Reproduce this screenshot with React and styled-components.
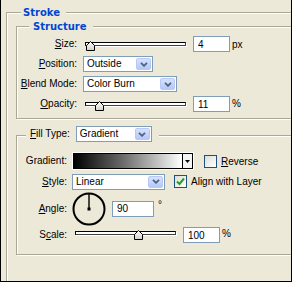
import React from "react";
import styled, { createGlobalStyle } from "styled-components";

const GlobalStyle = createGlobalStyle`
  html, body {
    margin: 0;
    padding: 0;
    background: #ece9d8;
  }
  body {
    font-family: "Liberation Sans", Arial, sans-serif;
    font-size: 10px;
    color: #000;
  }
`;

const Window = styled.div`
  width: 292px;
  height: 282px;
  box-sizing: border-box;
  border: 1px solid #000;
  border-top: none;
  background: #ece9d8;
  overflow: hidden;
  padding-left: 5px;
`;

const GroupBox = styled.fieldset`
  width: ${(p) => p.$w}px;
  min-width: 0;
  box-sizing: border-box;
  margin: ${(p) => p.$mt || 0}px 0 0 0;
  padding: ${(p) => p.$pt}px 0 ${(p) => p.$pb}px ${(p) => p.$pl}px;
  border: 1px solid #aca899;
  box-shadow: inset 1px 1px 0 #fff, 1px 1px 0 #fff;
`;

const Legend = styled.legend`
  margin-left: ${(p) => p.$ml}px;
  padding: 0 ${(p) => p.$pr}px 0 ${(p) => p.$pl}px;
  background: #ece9d8;
  font-family: "DejaVu Sans", Verdana, sans-serif;
  font-weight: bold;
  font-size: 10px;
  line-height: 13px;
  color: #0046d5;
`;

const ControlLegend = styled.legend`
  margin-left: 9px;
  padding: 0 7px 2px 4px;
  background: #ece9d8;
`;

const LegendInner = styled.div`
  display: flex;
  align-items: center;
`;

const Row = styled.div`
  display: flex;
  align-items: center;
  height: ${(p) => p.$h}px;
`;

const Label = styled.label`
  flex: none;
  width: ${(p) => p.$w}px;
  margin-right: 6px;
  text-align: right;
  white-space: nowrap;
  line-height: 12px;
`;

const InlineLabel = styled.label`
  flex: none;
  margin-right: 6px;
  white-space: nowrap;
  line-height: 12px;
`;

const Combo = styled.div`
  flex: none;
  display: flex;
  align-items: center;
  box-sizing: border-box;
  width: ${(p) => p.$w}px;
  height: 16px;
  margin-left: ${(p) => p.$ml || 0}px;
  padding: 1px;
  border: 1px solid #7f9db9;
  background: #fff;
`;

const ComboText = styled.span`
  flex: 1;
  padding-left: 2px;
  line-height: 12px;
  white-space: nowrap;
  overflow: hidden;
`;

const ComboButton = styled.span`
  flex: none;
  display: flex;
  align-items: center;
  justify-content: center;
  box-sizing: border-box;
  width: 15px;
  height: 12px;
  border: 1px solid #b7caf5;
  border-radius: 2px;
  background: linear-gradient(#d6e1fd, #b4c8f7);
`;

const NumberInput = styled.input`
  flex: none;
  box-sizing: border-box;
  width: ${(p) => p.$w}px;
  height: 16px;
  margin: 0 0 0 ${(p) => p.$ml}px;
  padding: 0 0 0 4px;
  border: 1px solid #7f9db9;
  background: #fff;
  font: 10px "Liberation Sans", Arial, sans-serif;
  color: #000;
  outline: none;
`;

const Unit = styled.span`
  align-self: flex-start;
  margin-top: ${(p) => p.$mt}px;
  margin-left: ${(p) => p.$ml}px;
  font-size: ${(p) => p.$size || 10}px;
  line-height: 10px;
`;

const SliderBox = styled.div`
  position: relative;
  flex: none;
  align-self: flex-start;
  width: ${(p) => p.$w}px;
  height: 10px;
  margin: ${(p) => p.$mt}px 0 0 ${(p) => p.$ml}px;
`;

const Track = styled.div`
  box-sizing: border-box;
  height: 4px;
  margin-top: 1px;
  border: 1px solid #000;
  border-right-color: #404040;
  border-bottom-color: #404040;
  background: #fff;
  box-shadow: 1px 1px 0 #fff;
`;

const Thumb = styled.svg`
  position: absolute;
  top: 0;
  display: block;
`;

const GradientPicker = styled.div`
  flex: none;
  display: flex;
  box-sizing: border-box;
  width: 120px;
  height: 16px;
  border: 1px solid #000;
  box-shadow: 0 0 0 1px #fff;
`;

const GradientSwatch = styled.div`
  flex: 1;
  background: linear-gradient(to right, #000 0%, #6a6a6a 45%, #ffffff 100%);
`;

const GradientArrow = styled.div`
  flex: none;
  display: flex;
  align-items: center;
  justify-content: center;
  width: 9px;
  border-left: 1px solid #000;
  background: #f4f4f4;
`;

const CheckField = styled.label`
  flex: none;
  display: flex;
  align-items: center;
  margin-left: ${(p) => p.$ml}px;
  white-space: nowrap;
`;

const CheckBox = styled.span`
  flex: none;
  display: flex;
  align-items: center;
  justify-content: center;
  box-sizing: border-box;
  width: 13px;
  height: 13px;
  margin-right: 4px;
  border: 1px solid #1c5180;
  background: linear-gradient(135deg, #dcdcd7, #ffffff);
`;

const Dial = styled.svg`
  flex: none;
  display: block;
  margin-left: -1px;
`;

const Chevron = () => (
  <svg width="8" height="5" viewBox="0 0 8 5">
    <polyline points="1,0.8 4,3.8 7,0.8" fill="none" stroke="#4d6185" strokeWidth="1.8" />
  </svg>
);

const Select = ({ width, value, ml }) => (
  <Combo $w={width} $ml={ml}>
    <ComboText>{value}</ComboText>
    <ComboButton>
      <Chevron />
    </ComboButton>
  </Combo>
);

const Slider = ({ width, value, min, max, ml, mt }) => {
  const left = Math.round(((value - min) / (max - min)) * (width - 9));
  return (
    <SliderBox $w={width} $ml={ml} $mt={mt}>
      <Track />
      <Thumb width="9" height="10" viewBox="0 0 9 10" style={{ left }}>
        <defs>
          <linearGradient id="thumbFill" x1="0" y1="0" x2="0" y2="1">
            <stop offset="0" stopColor="#ffffff" />
            <stop offset="1" stopColor="#d4d0c8" />
          </linearGradient>
        </defs>
        <polygon
          points="0.5,9.5 0.5,4.5 4.5,0.5 8.5,4.5 8.5,9.5"
          fill="url(#thumbFill)"
          stroke="#000"
          strokeWidth="1"
        />
      </Thumb>
    </SliderBox>
  );
};

const Check = ({ checked }) => (
  <CheckBox>
    {checked && (
      <svg width="9" height="9" viewBox="0 0 9 9">
        <polyline points="1,4.5 3.5,7 8,1.5" fill="none" stroke="#21a121" strokeWidth="2" />
      </svg>
    )}
  </CheckBox>
);

export default function App() {
  return (
    <>
      <GlobalStyle />
      <Window>
        <GroupBox $w={340} $mt={6} $pt={1} $pl={9} $pb={40}>
          <Legend $ml={5} $pl={2} $pr={6}>Stroke</Legend>

          <GroupBox $w={330} $pt={1} $pl={0} $pb={4}>
            <Legend $ml={12} $pl={4} $pr={6}>Structure</Legend>
            <Row $h={20}>
              <Label $w={60}>
                <u>S</u>ize:
              </Label>
              <Slider width={101} value={4} min={1} max={250} ml={2} mt={7} />
              <NumberInput $w={37} $ml={7} defaultValue="4" readOnly />
              <Unit $ml={2} $mt={6}>px</Unit>
            </Row>
            <Row $h={20}>
              <Label $w={60}>
                <u>P</u>osition:
              </Label>
              <Select width={70} value="Outside" />
            </Row>
            <Row $h={20}>
              <Label $w={60}>
                <u>B</u>lend Mode:
              </Label>
              <Select width={94} value="Color Burn" />
            </Row>
            <Row $h={20}>
              <Label $w={60}>
                <u>O</u>pacity:
              </Label>
              <Slider width={101} value={11} min={0} max={100} ml={2} mt={7} />
              <NumberInput $w={37} $ml={7} defaultValue="11" readOnly />
              <Unit $ml={2} $mt={5}>%</Unit>
            </Row>
          </GroupBox>

          <GroupBox $w={330} $mt={7} $pt={6} $pl={0} $pb={10}>
            <ControlLegend>
              <LegendInner>
                <InlineLabel>
                  <u>F</u>ill Type:
                </InlineLabel>
                <Select width={76} value="Gradient" />
              </LegendInner>
            </ControlLegend>
            <Row $h={22}>
              <Label $w={50}>Gradient:</Label>
              <GradientPicker>
                <GradientSwatch />
                <GradientArrow>
                  <svg width="5" height="3" viewBox="0 0 5 3">
                    <polygon points="0,0 5,0 2.5,3" fill="#000" />
                  </svg>
                </GradientArrow>
              </GradientPicker>
              <CheckField $ml={11}>
                <Check />
                <span>
                  <u>R</u>everse
                </span>
              </CheckField>
            </Row>
            <Row $h={19}>
              <Label $w={50}>
                <u>S</u>tyle:
              </Label>
              <Select width={93} value="Linear" ml={-1} />
              <CheckField $ml={9}>
                <Check checked />
                <span>Align with Layer</span>
              </CheckField>
            </Row>
            <Row $h={35}>
              <Label $w={50}>
                <u>A</u>ngle:
              </Label>
              <Dial width="34" height="34" viewBox="0 0 34 34">
                <circle cx="17" cy="17" r="15.5" fill="none" stroke="#000" strokeWidth="2" />
                <line x1="17" y1="17" x2="17" y2="2" stroke="#000" strokeWidth="1.4" />
                <rect x="15.5" y="15.5" width="3" height="3" fill="#000" />
              </Dial>
              <NumberInput $w={42} $ml={6} defaultValue="90" readOnly />
              <Unit $ml={4} $mt={9}>°</Unit>
            </Row>
            <Row $h={18}>
              <Label $w={50}>
                S<u>c</u>ale:
              </Label>
              <Slider width={101} value={100} min={10} max={150} ml={2} mt={4} />
              <NumberInput $w={37} $ml={7} defaultValue="100" readOnly />
              <Unit $ml={2} $mt={3}>%</Unit>
            </Row>
          </GroupBox>
        </GroupBox>
      </Window>
    </>
  );
}
